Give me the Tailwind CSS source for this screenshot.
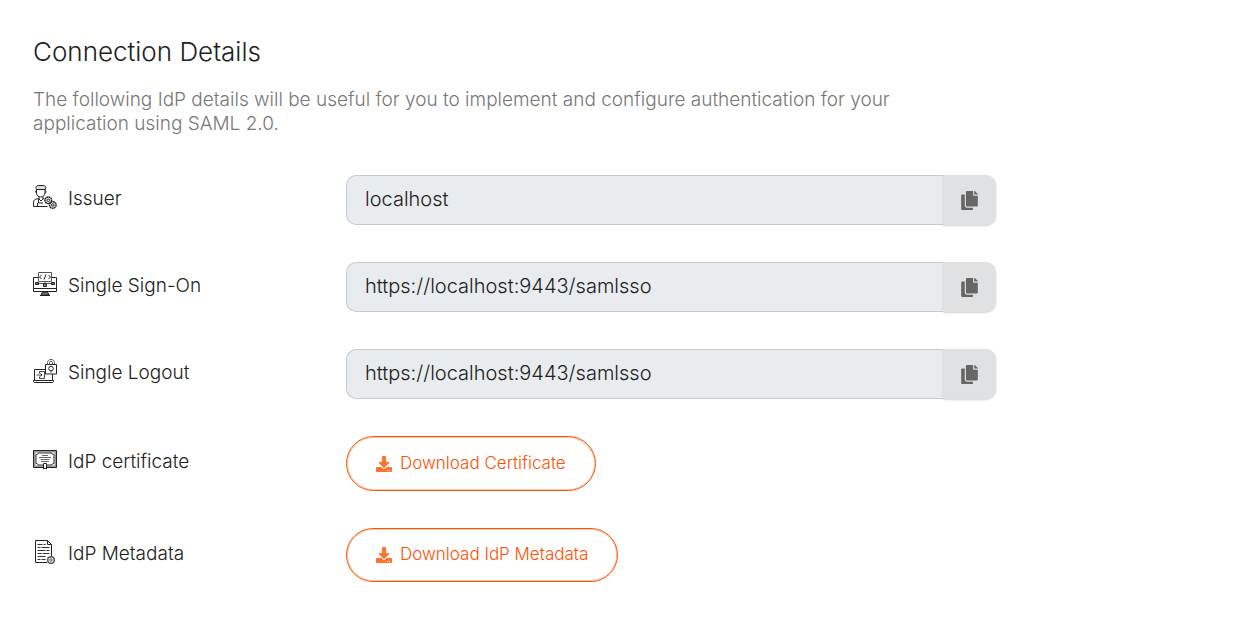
<!DOCTYPE html>
<html lang="en">
<head>
<meta charset="utf-8">
<meta name="viewport" content="width=device-width, initial-scale=1">
<title>Connection Details</title>
<script src="https://cdn.jsdelivr.net/npm/@tailwindcss/browser@4"></script>
</head>
<body class="bg-white font-['Inter',sans-serif] font-light text-[#212121]">
<svg class="hidden" aria-hidden="true">
  <symbol id="copy" viewBox="0 0 448 512"><path d="M320 448v40c0 13.255-10.745 24-24 24H24c-13.255 0-24-10.745-24-24V120c0-13.255 10.745-24 24-24h72v296c0 30.879 25.121 56 56 56h168zm0-344V0H152c-13.255 0-24 10.745-24 24v368c0 13.255 10.745 24 24 24h272c13.255 0 24-10.745 24-24V128H344c-13.2 0-24-10.8-24-24zm120.971-31.029L375.029 7.029A24 24 0 0 0 358.059 0H352v96h96v-6.059a24 24 0 0 0-7.029-16.97z"/></symbol>
  <symbol id="download" viewBox="0 0 512 512"><path d="M216 0h80c13.3 0 24 10.7 24 24v168h87.7c17.8 0 26.7 21.5 14.1 34.1L269.7 378.3c-7.5 7.5-19.8 7.5-27.3 0L90.1 226.1c-12.6-12.6-3.7-34.1 14.1-34.1H192V24c0-13.3 10.7-24 24-24zm296 376v112c0 13.3-10.7 24-24 24H24c-13.3 0-24-10.7-24-24V376c0-13.3 10.7-24 24-24h146.7l49 49c20.1 20.1 52.5 20.1 72.6 0l49-49H488c13.3 0 24 10.7 24 24zm-124 88c0-11-9-20-20-20s-20 9-20 20 9 20 20 20 20-9 20-20zm64 0c0-11-9-20-20-20s-20 9-20 20 9 20 20 20 20-9 20-20z"/></symbol>
</svg>
<main class="max-w-[1029px] px-[33px] pt-9 pb-10">
  <h1 class="text-[26px] leading-8 font-light">Connection Details</h1>
  <p class="mt-5 max-w-[900px] text-[19px] leading-6 text-[#777777]">The following IdP details will be useful for you to implement and configure authentication for your application using SAML 2.0.</p>

  <div class="mt-[39px] flex flex-col gap-[37px] text-[19px]">
    <div class="grid grid-cols-[313px_1fr] items-center">
      <label for="issuer" class="flex items-center gap-[11px] pb-[3px] leading-6">
        <svg class="mb-1 size-6 shrink-0" viewBox="0 0 24 24" fill="none" stroke="#222" stroke-width="1" aria-hidden="true">
          <path d="M3.500 4.500C2 2 3.500.5 6 .5h4c2.500 0 3.500 1.500 2.500 4z" fill="#ddd"/>
          <path d="M3.500 4.500v3c0 3 2 4.500 4.300 4.500s4.200-1.500 4.200-4.500v-3M3.500 5.500c-1.500 0-1 3 .5 2.500M12 5.500c1.500 0 1 3-.5 2.500M6 11.500V14l2 2 2-2v-2.500M5.500 13.500l-3 .8C1 14.800.5 16 .5 18v3.500h14M10 13.500l1.500.5M4.500 18v3.500M5.500 14v4h4.500"/>
          <circle cx="15.300" cy="15.300" r="3.300" stroke-width="1.500" stroke-dasharray="1.800 .4"/><circle cx="15.300" cy="15.300" r="1.300"/>
          <circle cx="19.800" cy="20" r="3.300" stroke-width="1.500" stroke-dasharray="1.800 .4"/><circle cx="19.800" cy="20" r="1.300"/>
        </svg>
        Issuer
      </label>
      <div class="flex items-start">
        <input id="issuer" type="text" readonly value="localhost" class="h-[50px] min-w-0 flex-1 rounded-l-[10px] border border-r-0 border-[#c7cbd0] bg-[#e8ecef] px-[18px] pb-[3px] text-xl outline-none">
        <button type="button" aria-label="Copy issuer" class="flex h-[50px] w-[53px] items-center justify-center rounded-r-[10px] bg-[#e0e1e2] shadow-[0_1px_2px_rgba(34,36,38,0.2)]"><svg class="h-[19px] w-[17px] fill-[#666]"><use href="#copy"/></svg></button>
      </div>
    </div>

    <div class="grid grid-cols-[313px_1fr] items-center">
      <label for="sso" class="flex items-center gap-[11px] pb-[3px] leading-6">
        <svg class="mb-1 size-6 shrink-0" viewBox="0 0 24 24" fill="none" stroke="#222" stroke-width="1" aria-hidden="true">
          <path d="M5.500 5.500h-5v14h23v-14h-5M.5 16.500h23"/><path d="M9.500 20h5l1.500 3H8z" fill="#777"/><path d="M7 23.500h10"/>
          <path d="M5.500.5h13v9h-13z" stroke="#555"/><path d="M8.500 3L6.500 5l2 2M15.500 3l2 2-2 2M13 2.500l-2 5"/>
          <path d="M6 11.500h12M12 9.500v5" stroke="#555"/><path d="M2.500 10.500h3v2h-3zM18.500 10.500h3v2h-3zM10.500 11.500h3v3h-3z" fill="#777"/>
        </svg>
        Single Sign-On
      </label>
      <div class="flex items-start">
        <input id="sso" type="text" readonly value="https://localhost:9443/samlsso" class="h-[50px] min-w-0 flex-1 rounded-l-[10px] border border-r-0 border-[#c7cbd0] bg-[#e8ecef] px-[18px] pb-[3px] text-xl outline-none">
        <button type="button" aria-label="Copy single sign-on URL" class="flex h-[50px] w-[53px] items-center justify-center rounded-r-[10px] bg-[#e0e1e2] shadow-[0_1px_2px_rgba(34,36,38,0.2)]"><svg class="h-[19px] w-[17px] fill-[#666]"><use href="#copy"/></svg></button>
      </div>
    </div>

    <div class="grid grid-cols-[313px_1fr] items-center">
      <label for="slo" class="flex items-center gap-[11px] pb-[3px] leading-6">
        <svg class="mb-1 size-6 shrink-0" viewBox="0 0 24 24" fill="none" stroke="#222" stroke-width="1" aria-hidden="true">
          <path d="M12.500 10.500h-11v10.500M19.500 15v6M.5 21.500h20v1c0 .6-.4 1-1 1h-18c-.6 0-1-.4-1-1z"/>
          <path d="M6.500 14.500v-2h5v7h-5v-2M3.500 16h5.500" stroke="#444"/><path d="M7.500 14.500L9 16l-1.500 1.500"/>
          <path d="M12.500 5.500h11v9.500h-11z"/><path d="M14.500 5.500V3.500c0-4 7-4 7 0v2M16.500 5.500V3.500c0-1.500 3-1.500 3 0v2" stroke="#555"/>
          <circle cx="18" cy="9.500" r="2.300"/><path d="M18 12v1.500"/>
        </svg>
        Single Logout
      </label>
      <div class="flex items-start">
        <input id="slo" type="text" readonly value="https://localhost:9443/samlsso" class="h-[50px] min-w-0 flex-1 rounded-l-[10px] border border-r-0 border-[#c7cbd0] bg-[#e8ecef] px-[18px] pb-[3px] text-xl outline-none">
        <button type="button" aria-label="Copy single logout URL" class="flex h-[50px] w-[53px] items-center justify-center rounded-r-[10px] bg-[#e0e1e2] shadow-[0_1px_2px_rgba(34,36,38,0.2)]"><svg class="h-[19px] w-[17px] fill-[#666]"><use href="#copy"/></svg></button>
      </div>
    </div>

    <div class="grid grid-cols-[313px_1fr] items-center">
      <div class="flex items-center gap-[11px] pb-[3px] leading-6">
        <svg class="mb-1 size-6 shrink-0" viewBox="0 0 24 24" fill="none" stroke="#222" stroke-width="1" aria-hidden="true">
          <path d="M1.500 3.500h21v15h-21z" stroke="#999" stroke-width="2"/><path d="M.5 2.500h23v17H.5z"/>
          <path d="M3 6.500c1.500 0 2-.5 2-1.500h14c0 1 .5 1.500 2 1.500v9c-1.500 0-2 .5-2 1.500H5c0-1-.5-1.500-2-1.500z" stroke="#333"/>
          <path d="M9 7.500h6M6 9.500h12M7.500 11.500h9M8 13.500h8" stroke="#666"/>
          <path d="M10.500 15.500h3v5.500l-1.500-1-1.500 1z" fill="#fff"/>
        </svg>
        IdP certificate
      </div>
      <div class="flex">
        <button type="button" class="flex h-[55px] items-center gap-2 rounded-full border border-[#f4560a] px-[29px] text-[17px] text-[#ff5000] shadow-[inset_0_0_0_1px_#f4560a55]"><svg class="size-4 fill-[#ff7330]"><use href="#download"/></svg>Download Certificate</button>
      </div>
    </div>

    <div class="grid grid-cols-[313px_1fr] items-center">
      <div class="flex items-center gap-[11px] pb-[3px] leading-6">
        <svg class="mb-1 size-6 shrink-0" viewBox="0 0 24 24" fill="none" stroke="#222" stroke-width="1" aria-hidden="true">
          <path d="M14 22.500H2.500V.5h12l4 4v12M14.500.5v4h4"/>
          <path d="M4.500 4.500h5M10.500 4.500h2M4.500 7.500h3M8.500 7.500h8M4.500 10.500h8M13.500 10.500h3M4.500 13.500h4M9.500 13.500h7M4.500 16.500h8M4.500 19.500h3M8.500 19.500h4" stroke="#333" stroke-width="1.200"/>
          <circle cx="18" cy="20" r="3.300" stroke="#555" stroke-width="1.500"/><circle cx="18" cy="20" r="1.200" stroke="#555"/>
        </svg>
        IdP Metadata
      </div>
      <div class="flex">
        <button type="button" class="flex h-[54px] items-center gap-2 rounded-full border border-[#f4560a] px-[29px] text-[17px] text-[#ff5000] shadow-[inset_0_0_0_1px_#f4560a55]"><svg class="size-4 fill-[#ff7330]"><use href="#download"/></svg>Download IdP Metadata</button>
      </div>
    </div>
  </div>
</main>
</body>
</html>
